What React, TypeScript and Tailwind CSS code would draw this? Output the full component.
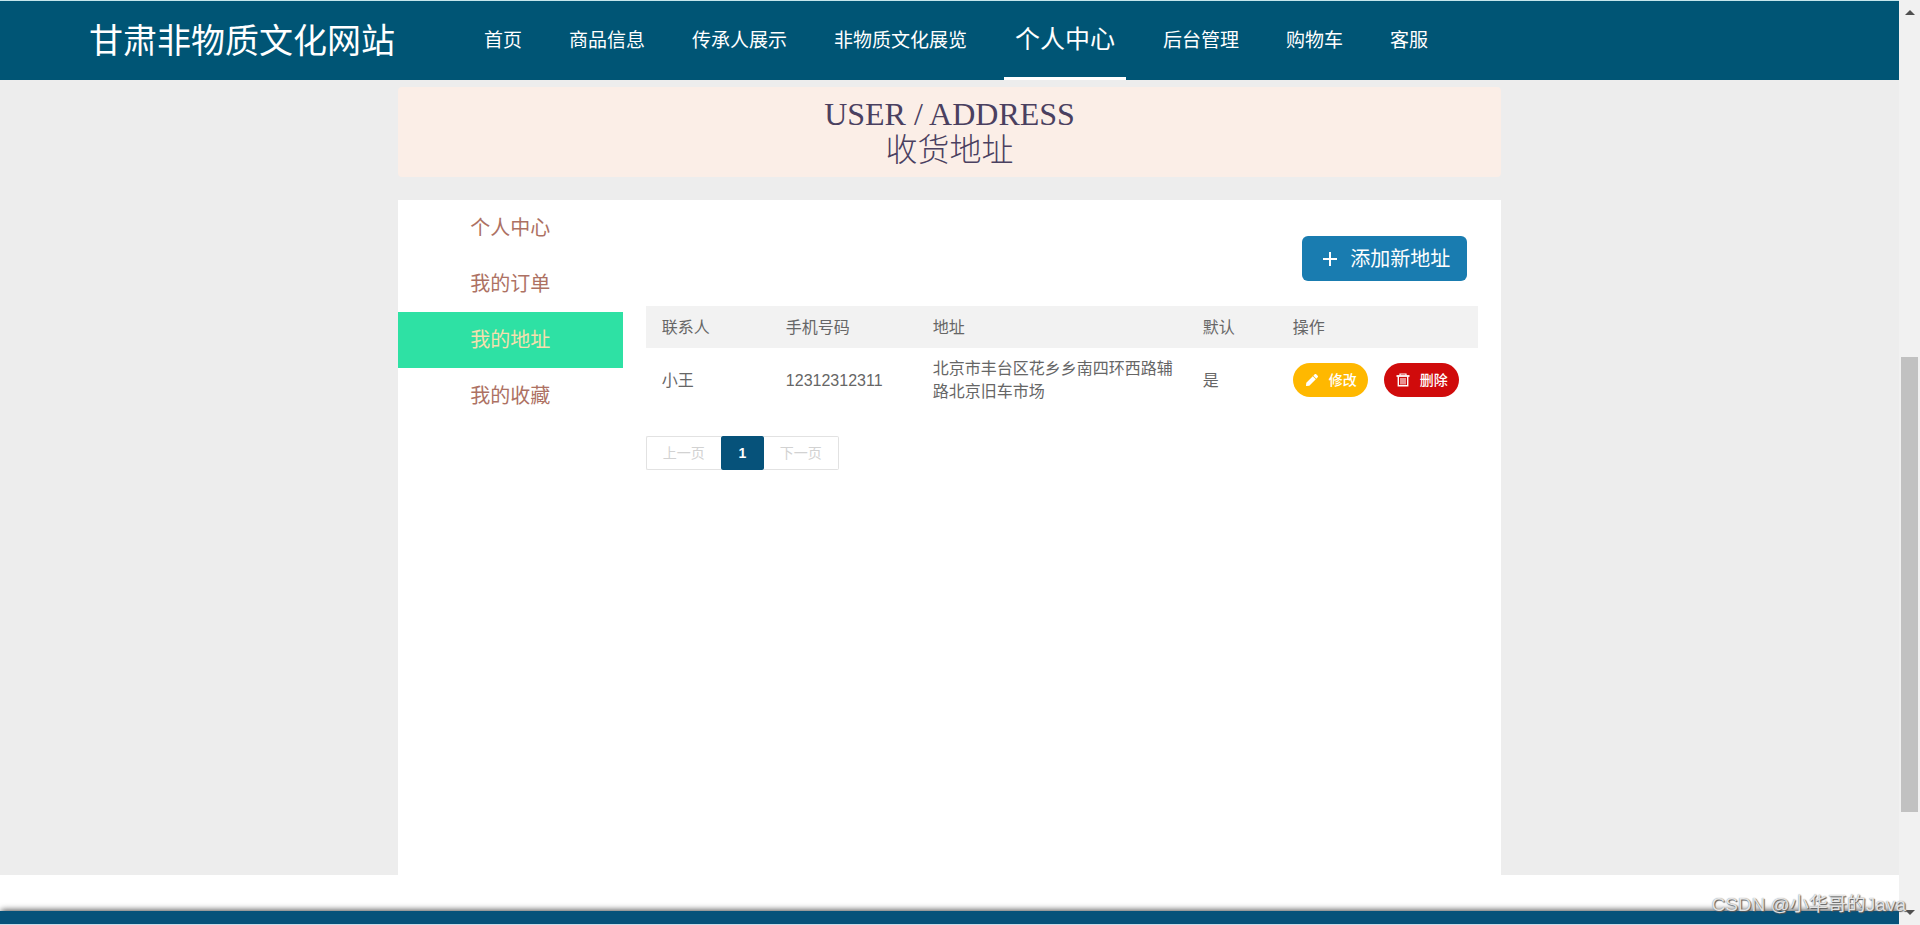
import { FaPen } from "react-icons/fa";

const navItems = [
  "首页",
  "商品信息",
  "传承人展示",
  "非物质文化展览",
  "个人中心",
  "后台管理",
  "购物车",
  "客服",
];
const sideItems = ["个人中心", "我的订单", "我的地址", "我的收藏"];
const columns = ["联系人", "手机号码", "地址", "默认", "操作"];

function PlusIcon() {
  return (
    <svg viewBox="0 0 16 16" className="size-4" aria-hidden="true">
      <path d="M8 1v14M1 8h14" stroke="currentColor" strokeWidth="2" fill="none" />
    </svg>
  );
}

function TrashIcon() {
  return (
    <svg viewBox="0 0 14 14" className="size-3.5" fill="none" stroke="currentColor" aria-hidden="true">
      <path d="M0.500 3h13" strokeWidth="1.800" />
      <path d="M4 2.500V1h6v1.500" strokeWidth="1.200" />
      <path d="M2.300 3.500v9.300h9.400V3.500" strokeWidth="1.400" />
      <path d="M5 5v6.500M7 5v6.500M9 5v6.500" strokeWidth="1.100" />
    </svg>
  );
}

function Header() {
  return (
    <header className="flex h-20 items-stretch border-t border-[#c5e6ec] bg-[#005575] pl-[89px] text-white">
      <h1 className="flex w-[385px] shrink-0 items-center pt-0.5 text-[34px] whitespace-nowrap">甘肃非物质文化网站</h1>
      <nav className="flex items-stretch gap-[27px]">
        {navItems.map((item) => (
          <a
            key={item}
            href="#"
            className={
              item === "个人中心"
                ? "flex items-center border-b-3 border-white px-[11px] pt-0.5 text-[25px] whitespace-nowrap"
                : "flex items-center px-2.5 pt-0.5 text-[19px] whitespace-nowrap shadow-[0_2px_2px_-1px_rgba(0,85,117,0.35)]"
            }
          >
            {item}
          </a>
        ))}
      </nav>
    </header>
  );
}

function Sidebar() {
  return (
    <aside className="w-[225px] shrink-0">
      <ul>
        {sideItems.map((item) => (
          <li key={item}>
            <a
              href="#"
              className={
                item === "我的地址"
                  ? "flex h-14 items-center justify-center bg-[#2ee1a4] text-xl text-[#f5dfae]"
                  : "flex h-14 items-center justify-center text-xl text-[#ad7163]"
              }
            >
              {item}
            </a>
          </li>
        ))}
      </ul>
    </aside>
  );
}

function AddressTable() {
  return (
    <table className="w-full table-fixed text-left text-base leading-[23px] text-[#666]">
      <colgroup>
        <col className="w-[124px]" />
        <col className="w-[147px]" />
        <col className="w-[270px]" />
        <col className="w-[90px]" />
        <col />
      </colgroup>
      <thead className="bg-[#f2f2f2]">
        <tr className="h-[42px]">
          {columns.map((c) => (
            <th key={c} className="pl-4 font-normal">
              {c}
            </th>
          ))}
        </tr>
      </thead>
      <tbody>
        <tr className="h-16">
          <td className="pl-4">小王</td>
          <td className="pl-4">12312312311</td>
          <td className="pr-3 pl-4">北京市丰台区花乡乡南四环西路辅路北京旧车市场</td>
          <td className="pl-4">是</td>
          <td className="pl-4">
            <div className="flex gap-4">
              <button className="flex h-[34px] items-center gap-2.5 rounded-full bg-[#ffb800] pr-[11px] pl-3 text-sm font-medium whitespace-nowrap text-white">
                <FaPen className="mx-px size-3" aria-hidden="true" />
                修改
              </button>
              <button className="flex h-[34px] items-center gap-2.5 rounded-full bg-[#d00b0b] pr-[11px] pl-3 text-sm font-medium whitespace-nowrap text-white">
                <TrashIcon />
                删除
              </button>
            </div>
          </td>
        </tr>
      </tbody>
    </table>
  );
}

function Pagination() {
  return (
    <nav aria-label="分页" className="mt-6 flex h-[34px] text-sm">
      <button disabled className="w-[75px] rounded-l-xs border border-r-0 border-[#e2e2e2] text-[#d2d2d2]">
        上一页
      </button>
      <button className="w-[43px] rounded-xs bg-[#06527a] font-bold text-white">1</button>
      <button disabled className="w-[75px] rounded-r-xs border border-l-0 border-[#e2e2e2] text-[#d2d2d2]">
        下一页
      </button>
    </nav>
  );
}

function Scrollbar() {
  return (
    <div aria-hidden="true" className="flex w-[21px] shrink-0 flex-col items-center bg-[#f1f1f1] py-2.5">
      <svg viewBox="0 0 10 5" className="h-[5px] w-2.5">
        <path d="M0 5L5 0L10 5Z" fill="#505050" />
      </svg>
      <div className="flex w-full flex-1 flex-col items-center">
        <div className="flex-[342]" />
        <div className="w-[17px] flex-[455] bg-[#c1c1c1]" />
        <div className="flex-[98]" />
      </div>
      <svg viewBox="0 0 10 5" className="h-[5px] w-2.5">
        <path d="M0 0L5 5L10 0Z" fill="#505050" />
      </svg>
    </div>
  );
}

export default function App() {
  return (
    <div className="relative flex min-h-screen overflow-hidden bg-white font-['Liberation_Sans','Noto_Sans_CJK_SC',sans-serif]">
      <div className="flex min-w-0 flex-1 flex-col">
        <Header />
        <main className="flex flex-1 flex-col bg-[#ededed] pt-[7px]">
          <div className="mx-auto flex w-[58.1%] min-w-[1000px] flex-1 flex-col">
            <div className="flex h-[90px] flex-col items-center justify-center rounded bg-[#fbeee7] font-['Liberation_Serif','Noto_Sans_CJK_SC',serif] text-[32px] leading-9 text-[#4a4060]">
              <span>USER / ADDRESS</span>
              <h2 className="font-light">收货地址</h2>
            </div>
            <div className="mt-[23px] flex flex-1 bg-white">
              <Sidebar />
              <section className="min-w-0 flex-1 px-[23px] pt-9">
                <div className="mb-[25px] flex justify-end pr-[11px]">
                  <button className="flex h-[45px] items-center gap-3 rounded-md bg-[#197cb0] pt-px pr-[17px] pl-5 text-xl text-white">
                    <PlusIcon />
                    添加新地址
                  </button>
                </div>
                <AddressTable />
                <Pagination />
              </section>
            </div>
          </div>
        </main>
        <div className="h-9 shrink-0" />
        <footer className="h-3.5 shrink-0 border-b border-[#c9dbe8] bg-[#06527a] shadow-[2px_0_6px_1px_rgba(0,0,0,0.7)]" />
      </div>
      <Scrollbar />
      <div className="absolute right-3.5 bottom-1.5 text-[19px] leading-7 whitespace-nowrap text-white/80 [text-shadow:1px_1px_1px_#555,0_0_1px_#777]">
        CSDN @小华哥的Java
      </div>
    </div>
  );
}
